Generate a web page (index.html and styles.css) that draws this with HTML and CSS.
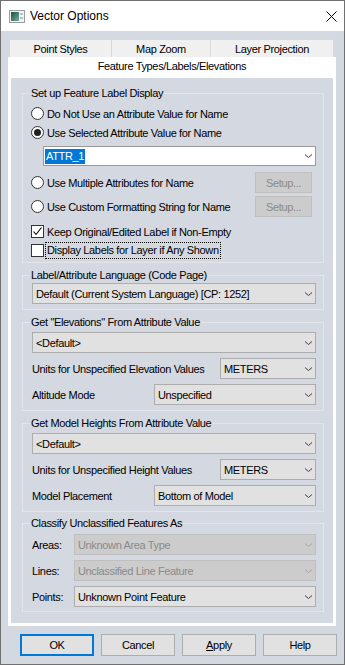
FILE: index.html
```html
<!DOCTYPE html>
<html lang="en">
<head>
    <meta charset="UTF-8">
    <title>Vector Options</title>
    <link rel="stylesheet" href="styles.css">
</head>
<body>
    <div class="window">
        <!-- Barra de titulo -->
        <div class="titlebar">
            <svg class="app-icon" width="16" height="13" viewBox="0 0 16 13">
                <defs>
                    <linearGradient id="iconGrad" x1="0" y1="0" x2="1" y2="1">
                        <stop offset="0" stop-color="#1d4f45"/>
                        <stop offset="1" stop-color="#6fae9c"/>
                    </linearGradient>
                </defs>
                <rect x="0.5" y="0.5" width="15" height="12" fill="#f2f2f2" stroke="#9c9c9c"/>
                <rect x="2" y="2" width="8" height="9" fill="url(#iconGrad)"/>
                <rect x="11" y="3" width="3" height="2" fill="#b6c2ca"/>
                <rect x="11" y="7" width="3" height="2" fill="#b6c2ca"/>
            </svg>
            <span class="title">Vector Options</span>
            <svg class="close" width="11" height="11" viewBox="0 0 11 11">
                <path d="M0.5 0.5 L10.5 10.5 M10.5 0.5 L0.5 10.5" stroke="#000" stroke-width="1"/>
            </svg>
        </div>

        <!-- Abas -->
        <div class="tabs">
            <div class="tab tab-points">Point Styles</div>
            <div class="tab tab-zoom">Map Zoom</div>
            <div class="tab tab-proj">Layer Projection</div>
        </div>

        <div class="page">
            <div class="page-tab">Feature Types/Labels/Elevations</div>
            <div class="page-content">

                <fieldset class="group group-label">
                    <legend>Set up Feature Label Display</legend>
                    <label class="opt"><span class="radio"></span>Do Not Use an Attribute Value for Name</label>
                    <label class="opt"><span class="radio on"></span>Use Selected Attribute Value for Name</label>
                    <div class="combo combo-edit">
                        <span class="selected-text">ATTR_1</span>
                        <svg class="chev" width="7" height="4" viewBox="0 0 7 4"><path d="M0 0.5 L3.5 3.5 L7 0.5" fill="none" stroke="#404040"/></svg>
                    </div>
                    <div class="opt-row">
                        <label class="opt"><span class="radio"></span>Use Multiple Attributes for Name</label>
                        <button class="btn btn-setup" disabled>Setup...</button>
                    </div>
                    <div class="opt-row opt-row-tight">
                        <label class="opt"><span class="radio"></span>Use Custom Formatting String for Name</label>
                        <button class="btn btn-setup" disabled>Setup...</button>
                    </div>
                    <label class="opt opt-check">
                        <span class="check">
                            <svg width="11" height="11" viewBox="0 0 11 11"><path d="M1.5 5.5 L4 8.5 L9.5 1.5" fill="none" stroke="#000" stroke-width="1.1"/></svg>
                        </span>Keep Original/Edited Label if Non-Empty
                    </label>
                    <label class="opt"><span class="check"></span><span class="focus">Display Labels for Layer if Any Shown</span></label>
                </fieldset>

                <fieldset class="group group-lang">
                    <legend>Label/Attribute Language (Code Page)</legend>
                    <div class="combo">
                        <span>Default (Current System Language) [CP: 1252]</span>
                        <svg class="chev" width="7" height="4" viewBox="0 0 7 4"><path d="M0 0.5 L3.5 3.5 L7 0.5" fill="none" stroke="#404040"/></svg>
                    </div>
                </fieldset>

                <fieldset class="group group-elev">
                    <legend>Get "Elevations" From Attribute Value</legend>
                    <div class="combo">
                        <span>&lt;Default&gt;</span>
                        <svg class="chev" width="7" height="4" viewBox="0 0 7 4"><path d="M0 0.5 L3.5 3.5 L7 0.5" fill="none" stroke="#404040"/></svg>
                    </div>
                    <div class="field-row">
                        <span>Units for Unspecified Elevation Values</span>
                        <div class="combo combo-short">
                            <span>METERS</span>
                            <svg class="chev" width="7" height="4" viewBox="0 0 7 4"><path d="M0 0.5 L3.5 3.5 L7 0.5" fill="none" stroke="#404040"/></svg>
                        </div>
                    </div>
                    <div class="field-row">
                        <span>Altitude Mode</span>
                        <div class="combo combo-mid">
                            <span>Unspecified</span>
                            <svg class="chev" width="7" height="4" viewBox="0 0 7 4"><path d="M0 0.5 L3.5 3.5 L7 0.5" fill="none" stroke="#404040"/></svg>
                        </div>
                    </div>
                </fieldset>

                <fieldset class="group group-model">
                    <legend>Get Model Heights From Attribute Value</legend>
                    <div class="combo">
                        <span>&lt;Default&gt;</span>
                        <svg class="chev" width="7" height="4" viewBox="0 0 7 4"><path d="M0 0.5 L3.5 3.5 L7 0.5" fill="none" stroke="#404040"/></svg>
                    </div>
                    <div class="field-row">
                        <span>Units for Unspecified Height Values</span>
                        <div class="combo combo-short">
                            <span>METERS</span>
                            <svg class="chev" width="7" height="4" viewBox="0 0 7 4"><path d="M0 0.5 L3.5 3.5 L7 0.5" fill="none" stroke="#404040"/></svg>
                        </div>
                    </div>
                    <div class="field-row">
                        <span>Model Placement</span>
                        <div class="combo combo-mid">
                            <span>Bottom of Model</span>
                            <svg class="chev" width="7" height="4" viewBox="0 0 7 4"><path d="M0 0.5 L3.5 3.5 L7 0.5" fill="none" stroke="#404040"/></svg>
                        </div>
                    </div>
                </fieldset>

                <fieldset class="group group-classify">
                    <legend>Classify Unclassified Features As</legend>
                    <div class="field-row">
                        <span>Areas:</span>
                        <div class="combo combo-wide disabled">
                            <span>Unknown Area Type</span>
                            <svg class="chev" width="7" height="4" viewBox="0 0 7 4"><path d="M0 0.5 L3.5 3.5 L7 0.5" fill="none" stroke="#a6a6a6"/></svg>
                        </div>
                    </div>
                    <div class="field-row">
                        <span>Lines:</span>
                        <div class="combo combo-wide disabled">
                            <span>Unclassified Line Feature</span>
                            <svg class="chev" width="7" height="4" viewBox="0 0 7 4"><path d="M0 0.5 L3.5 3.5 L7 0.5" fill="none" stroke="#a6a6a6"/></svg>
                        </div>
                    </div>
                    <div class="field-row">
                        <span>Points:</span>
                        <div class="combo combo-wide">
                            <span>Unknown Point Feature</span>
                            <svg class="chev" width="7" height="4" viewBox="0 0 7 4"><path d="M0 0.5 L3.5 3.5 L7 0.5" fill="none" stroke="#404040"/></svg>
                        </div>
                    </div>
                </fieldset>

            </div>
        </div>

        <!-- Botoes do dialogo -->
        <div class="buttons">
            <button class="btn btn-default">OK</button>
            <button class="btn">Cancel</button>
            <button class="btn"><u>A</u>pply</button>
            <button class="btn">Help</button>
        </div>
    </div>
</body>
</html>
```

FILE: styles.css
```css
/* Estilo geral */
body {
    margin: 0;
    font-family: "Liberation Sans", Arial, sans-serif;
    font-size: 11px;
    letter-spacing: -0.35px;
    color: #000;
    overflow: hidden;
}
.window {
    width: 345px;
    height: 665px;
    box-sizing: border-box;
    border: 1px solid #707070;
    background: #d4d8e0;
}

/* Barra de titulo */
.titlebar {
    height: 30px;
    background: #fff;
    display: flex;
    align-items: center;
    padding: 0 7px 0 8px;
}
.app-icon {
    margin-right: 5px;
    margin-top: 1px;
}
.title {
    font-size: 12px;
    letter-spacing: 0;
    flex: 1;
}
.close {
    margin-top: 1px;
}

/* Abas */
.tabs {
    display: flex;
    margin: 8px 0 0 8px;
    width: 325px;
    height: 18px;
}
.tab {
    box-sizing: border-box;
    background: #f0f0f0;
    border: 1px solid #d9d9d9;
    border-bottom: none;
    text-align: center;
    line-height: 18px;
}
.tab + .tab {
    border-left: none;
}
.tab-points { width: 103px; }
.tab-zoom { width: 99px; }
.tab-proj { width: 123px; }

.page {
    margin-left: 7px;
    width: 328px;
    height: 569px;
    box-sizing: border-box;
    background: #fff;
    padding: 0 3px 3px 3px;
    display: flex;
    flex-direction: column;
}
.page-tab {
    height: 21px;
    line-height: 19px;
    text-align: center;
}
.page-content {
    flex: 1;
    background: #d4d8e0;
    padding-top: 8px;
}

/* Caixas de grupo */
.group {
    margin: 0 9px 0 11px;
    min-width: 0;
    border: 1px solid #e2e5ea;
    padding: 0 7px 5px 9px;
}
.group legend {
    padding: 0 1px;
    margin-left: -2px;
    line-height: 14px;
}
.group-label {
    padding-top: 4px;
    padding-bottom: 2px;
}
.group-lang {
    margin-top: 5px;
}
.group-lang .combo {
    margin-top: 1px;
}
.group-elev {
    margin-top: 5px;
}
.group-model {
    margin-top: 5px;
}
.group-elev > .combo,
.group-model > .combo {
    margin-top: 3px;
}
.group-classify {
    margin-top: 4px;
    padding-bottom: 4px;
}
.group-classify .field-row:first-of-type {
    margin-top: 4px;
}

/* Opcoes radio e checkbox */
.opt {
    display: flex;
    align-items: center;
    height: 19px;
}
.radio, .check {
    box-sizing: border-box;
    width: 13px;
    height: 13px;
    margin: 0 3px 0 -1px;
    border: 1px solid #333;
    background: #fff;
    display: flex;
    align-items: center;
    justify-content: center;
}
.radio {
    border-radius: 50%;
}
.radio.on::after {
    content: "";
    width: 7px;
    height: 7px;
    border-radius: 50%;
    background: #1f1f1f;
}
.opt-check {
    margin-top: 5px;
}
.focus {
    outline: 1px dotted #000;
    padding: 1px 1px;
    margin-left: -1px;
    line-height: 13px;
}
.opt-row {
    display: flex;
    align-items: center;
    justify-content: space-between;
    height: 21px;
    margin-top: 6px;
}
.opt-row-tight {
    margin-top: 3px;
}

/* Listas suspensas */
.combo {
    box-sizing: border-box;
    height: 21px;
    border: 1px solid #adadad;
    background: #e1e1e1;
    display: flex;
    align-items: center;
    justify-content: space-between;
    padding: 0 3px 0 3px;
}
.combo-edit {
    height: 20px;
    margin: 4px 0 0 11px;
    background: #fff;
    border-color: #9a9a9a;
    padding-left: 1px;
}
.selected-text {
    background: #0078d7;
    color: #fff;
    padding: 1px 1px;
    line-height: 13px;
}
.combo.disabled {
    background: #cccccc;
    border-color: #bfbfbf;
    color: #8a8a8a;
}
.field-row {
    display: flex;
    align-items: center;
    justify-content: space-between;
    margin-top: 5px;
}
.combo-short { width: 96px; }
.combo-mid { width: 162px; }
.combo-wide { width: 242px; }

/* Botoes */
.btn {
    box-sizing: border-box;
    height: 22px;
    background: #e1e1e1;
    border: 1px solid #adadad;
    font-family: inherit;
    font-size: 11px;
    letter-spacing: -0.35px;
    color: #000;
    padding: 0;
}
.btn-setup {
    width: 57px;
    height: 21px;
    margin-right: 4px;
}
.btn:disabled {
    background: #cccccc;
    border-color: #bfbfbf;
    color: #8a8a8a;
}
.btn-default {
    border: 2px solid #0078d7;
}
.buttons {
    display: grid;
    grid-template-columns: repeat(4, 74px);
    gap: 7px;
    margin: 8px 0 0 19px;
}
```
